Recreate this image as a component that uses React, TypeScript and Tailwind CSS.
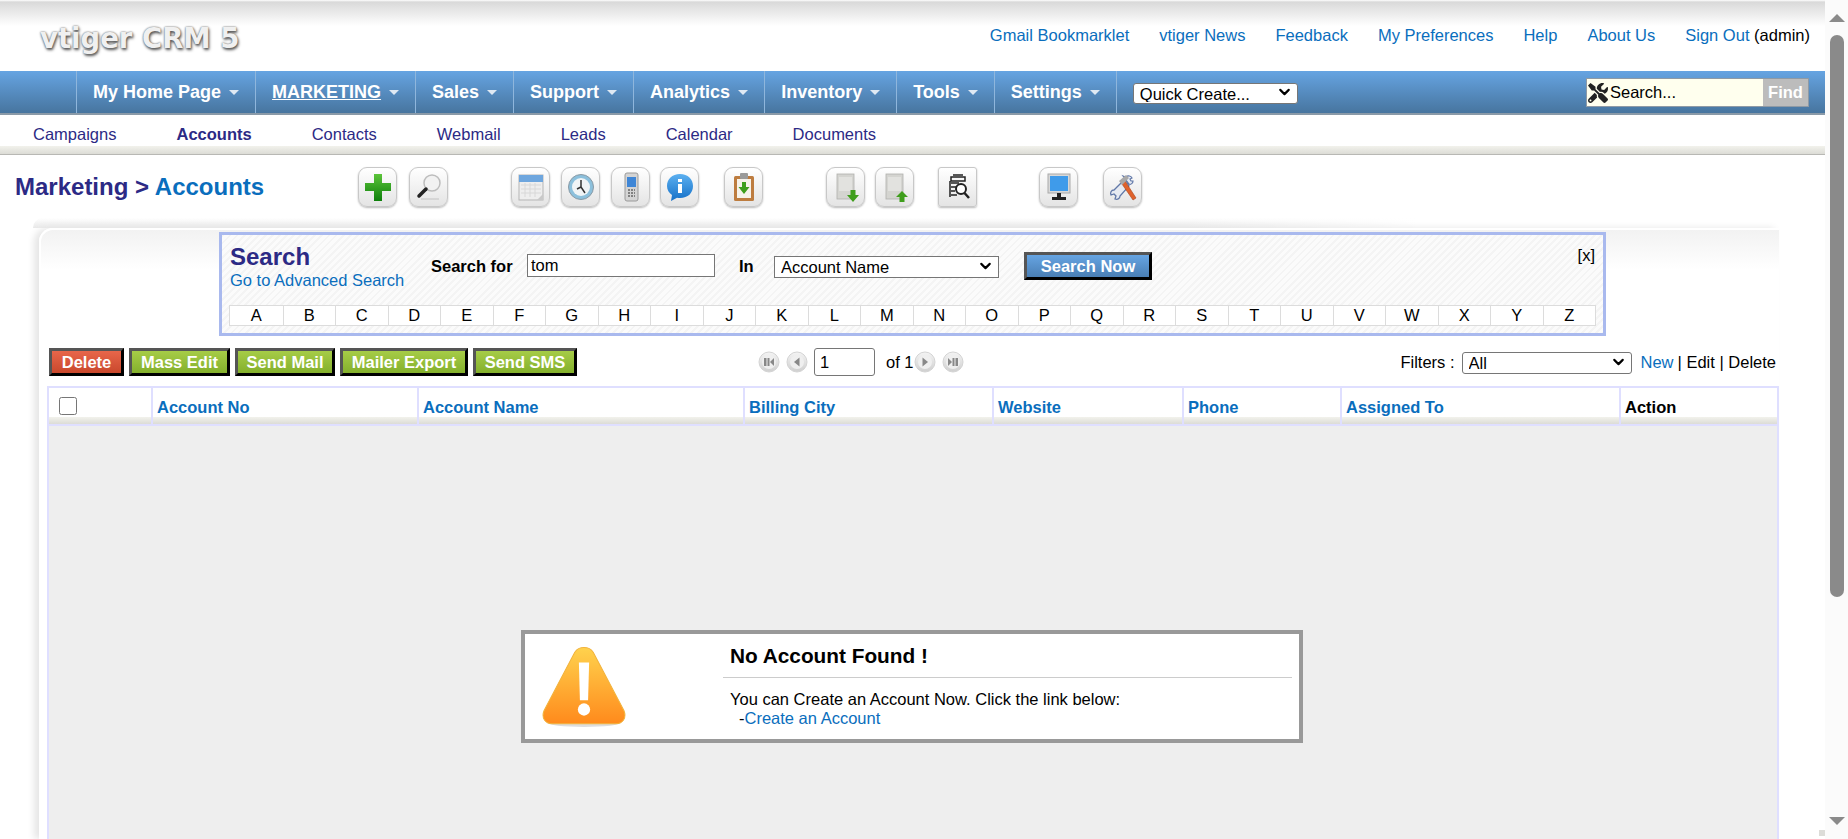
import { ChevronDown } from "lucide-react";
import { FaTools } from "react-icons/fa";
import type { ReactNode } from "react";

const topLinks = ["Gmail Bookmarklet", "vtiger News", "Feedback", "My Preferences", "Help", "About Us"];
const navItems = ["My Home Page", "MARKETING", "Sales", "Support", "Analytics", "Inventory", "Tools", "Settings"];
const subItems = ["Campaigns", "Accounts", "Contacts", "Webmail", "Leads", "Calendar", "Documents"];
const letters = "ABCDEFGHIJKLMNOPQRSTUVWXYZ".split("");
const columns = ["Account No", "Account Name", "Billing City", "Website", "Phone", "Assigned To"];
const actions = [
  { label: "Mass Edit", width: "w-[101px]" },
  { label: "Send Mail", width: "w-[100px]" },
  { label: "Mailer Export", width: "w-[128px]" },
  { label: "Send SMS", width: "w-[104px]" },
];

const IconButton = ({ className, children }: { className?: string; children: ReactNode }) => (
  <div
    className={`w-[39px] h-[40px] rounded-[9px] border border-[#c8c8c8] bg-gradient-to-b from-white to-[#e4e4e4] shadow-[0_1px_2px_#bbb] flex items-center justify-center shrink-0 ${className ?? ""}`}
  >
    <svg width="30" height="32" viewBox="0 0 30 32">
      {children}
    </svg>
  </div>
);

const NativeSelect = ({ value, className }: { value: string; className: string }) => (
  <div className={`relative shrink-0 ${className}`}>
    <select className="w-full h-full appearance-none bg-white border border-[#767676] rounded-[inherit] pl-[6px] text-[16.5px] leading-none text-black">
      <option>{value}</option>
    </select>
    <ChevronDown className="absolute right-[5px] top-1/2 -translate-y-1/2 w-[17px] h-[17px] text-black" strokeWidth={3} />
  </div>
);

const GreenArrow = ({ up }: { up?: boolean }) => (
  <path
    d={up ? "M22 20l6 6h-3.500v5h-5v-5H16z" : "M19.500 19h5v5H28l-6 7-6-7h3.500z"}
    fill="#3f9e1c"
  />
);

const GrayDoc = () => (
  <>
    <rect x="6" y="3" width="17" height="25" fill="#d4d4d0" stroke="#b0b0ac" strokeWidth="0.8" />
    <rect x="8" y="6" width="13" height="14" fill="#e2e2df" />
  </>
);

const PageArrow = ({ kind }: { kind: "first" | "prev" | "next" | "last" }) => (
  <svg width="22" height="22" viewBox="0 0 22 22" className="shrink-0">
    <defs>
      <linearGradient id={`pg-${kind}`} x1="0" y1="0" x2="0" y2="1">
        <stop offset="0" stopColor="#f4f4f4" />
        <stop offset="1" stopColor="#cfcfcf" />
      </linearGradient>
    </defs>
    <circle cx="11" cy="11" r="10" fill={`url(#pg-${kind})`} stroke="#d4d4d4" />
    <circle cx="11" cy="11" r="7" fill="#efefef" />
    {kind === "first" && <path d="M6 7h2.500v8H6zM9.500 7h2v8h-2zM16 7v8l-4-4z" fill="#888" />}
    {kind === "prev" && <path d="M13.500 6.500v9L8 11z" fill="#888" />}
    {kind === "next" && <path d="M8.500 6.500v9L14 11z" fill="#888" />}
    {kind === "last" && <path d="M6 7l4 4-4 4zM10.500 7h2v8h-2zM13.500 7H16v8h-2.500z" fill="#888" />}
  </svg>
);

const App = () => {
  return (
    <div className="flex h-[839px] w-full overflow-hidden bg-white font-['Liberation_Sans',Arial,sans-serif] text-[16.5px] text-black">
      <div className="relative w-[1825px] shrink-0">
        {/* top strip with logo and links */}
        <div className="h-[71px] bg-[linear-gradient(to_bottom,#fff_0,#d9d9d9_2px,#fff_26px)] flex items-start">
          <div className="ml-[40px] mt-[18px] text-[27.5px] leading-[40px] font-bold text-[#f0f0f0] font-['DejaVu_Sans',sans-serif] [text-shadow:0_0_2px_#555,1px_2px_3px_#555]">
            vtiger CRM 5
          </div>
          <div className="ml-auto mt-[25px] pr-[15px] flex items-center gap-[30px] leading-[20px]">
            {topLinks.map((link) => (
              <span key={link} className="text-[#0a6ebd]">
                {link}
              </span>
            ))}
            <span>
              <span className="text-[#0a6ebd]">Sign Out</span> (admin)
            </span>
          </div>
        </div>

        {/* main nav */}
        <div className="h-[44px] flex items-stretch pl-[76px] bg-gradient-to-b from-[#66a4e2] to-[#47759f] border-b-2 border-[#8a9aa8]">
          {navItems.map((item) => (
            <div
              key={item}
              className="flex items-center gap-[8px] px-4 border-l border-[#8fb6dc] text-white font-bold text-[18px]"
            >
              <span className={item === "MARKETING" ? "underline" : ""}>{item}</span>
              <span className="w-0 h-0 border-x-[5px] border-x-transparent border-t-[5px] border-t-[#dfe9f3]" />
            </div>
          ))}
          <div className="flex items-center pl-4 border-l border-[#8fb6dc]">
            <NativeSelect value="Quick Create..." className="w-[165px] h-[21px] rounded-[3px]" />
          </div>
          <div className="ml-auto mr-[16px] mt-[7px] mb-[6px] w-[223px] flex border border-[#8f9aa5] bg-[#ffffee]">
            <div className="flex-1 flex items-center pl-[1px] gap-[2px]">
              <FaTools className="w-[20px] h-[20px] text-[#222]" />
              <span>Search...</span>
            </div>
            <div className="w-[45px] bg-[#bcbcbc] flex items-center justify-center text-white font-bold">Find</div>
          </div>
        </div>

        {/* sub nav */}
        <div className="h-[31px] flex items-center gap-[60px] pl-[33px] pt-[8px] text-[#2c2a85]">
          {subItems.map((item) => (
            <span key={item} className={item === "Accounts" ? "font-bold" : ""}>
              {item}
            </span>
          ))}
        </div>
        <div className="h-[9px] bg-gradient-to-b from-[#f2f2ec] to-[#dcdcd6] border-b border-[#b8b8b4]" />

        {/* title + tool icons */}
        <div className="h-[63px] flex items-start pl-[15px] pt-[12px]">
          <div className="w-[343px] shrink-0 pt-[5px] text-[24px] leading-[30px] font-bold text-[#2c2a85]">
            Marketing &gt; <span className="text-[#0a6ebd]">Accounts</span>
          </div>
          <IconButton>
            <defs>
              <linearGradient id="plus" x1="0" y1="0" x2="0" y2="1">
                <stop offset="0" stopColor="#5cc43a" />
                <stop offset="1" stopColor="#0d7f0b" />
              </linearGradient>
            </defs>
            <path d="M11 3h8v9h9v8h-9v10h-8V20H2v-8h9z" fill="url(#plus)" />
          </IconButton>
          <IconButton className="ml-[12px]">
            <circle cx="18" cy="12" r="8" fill="#f2f2f2" stroke="#bdbdbd" strokeWidth="1.500" />
            <path d="M12 18L5 25" stroke="#222" strokeWidth="3.500" strokeLinecap="round" />
            <path d="M7 28h18" stroke="#cfcfcf" strokeWidth="1.500" />
          </IconButton>
          <IconButton className="ml-[63px]">
            <rect x="3" y="4" width="24" height="25" fill="#eeeeee" stroke="#b5b5b5" />
            <rect x="3" y="4" width="24" height="7" fill="#6ea6de" />
            <path d="M5 14h20M5 18h20M5 22h20M9 12v14M14 12v14M19 12v14" stroke="#d8d8d8" />
            <path d="M21 29l6-6v6z" fill="#c9c9c9" />
          </IconButton>
          <IconButton className="ml-[11px]">
            <circle cx="15" cy="16" r="12.500" fill="#8cc0dc" stroke="#8a9aa5" />
            <circle cx="15" cy="16" r="9" fill="#f0f4f6" />
            <path d="M15 9v7l4 6M15 16l-4 2" stroke="#333" strokeWidth="1.500" fill="none" />
          </IconButton>
          <IconButton className="ml-[11px]">
            <rect x="9" y="2" width="13" height="28" rx="2" fill="#d4d4d4" stroke="#9a9a9a" />
            <rect x="11" y="6" width="9" height="10" fill="#3f86d6" />
            <path d="M12 19h2M15 19h2M18 19h1M12 22h2M15 22h2M18 22h1M12 25h2M15 25h2M18 25h1" stroke="#666" strokeWidth="1.500" />
          </IconButton>
          <IconButton className="ml-[10px]">
            <defs>
              <linearGradient id="info" x1="0" y1="0" x2="0" y2="1">
                <stop offset="0" stopColor="#5cb0f0" />
                <stop offset="1" stopColor="#1570c8" />
              </linearGradient>
            </defs>
            <path d="M15 3c8 0 13 5 13 12s-5 12-13 12c-1 0-2 0-3-.3L6 30l1-6c-3-2-5-5-5-9C2 8 7 3 15 3z" fill="url(#info)" />
            <rect x="13" y="8" width="4" height="3" fill="#fff" />
            <rect x="13" y="13" width="4" height="9" fill="#fff" />
          </IconButton>
          <IconButton className="ml-[25px]">
            <rect x="5" y="5" width="20" height="25" rx="1.500" fill="#bd7c3f" />
            <rect x="8" y="8" width="14" height="19" fill="#f6f2ea" />
            <rect x="11" y="2" width="8" height="6" rx="1" fill="#9a9a9a" />
            <path d="M13 11h4v5h3.500L15 23l-5.500-7H13z" fill="#3f9e1c" />
          </IconButton>
          <IconButton className="ml-[63px]">
            <GrayDoc />
            <GreenArrow />
          </IconButton>
          <IconButton className="ml-[10px]">
            <GrayDoc />
            <GreenArrow up />
          </IconButton>
          <IconButton className="ml-[24px] !rounded-[3px]">
            <path d="M8 6h14v4H8zM10 4h10" fill="none" stroke="#222" strokeWidth="1.500" />
            <path d="M8 12h8M8 16h5M8 20h4M8 24h6M7 10v16" stroke="#222" strokeWidth="1.500" fill="none" />
            <circle cx="18" cy="18" r="5" fill="#fff" stroke="#222" strokeWidth="2" />
            <path d="M21.500 22L26 27" stroke="#222" strokeWidth="2.500" />
          </IconButton>
          <IconButton className="ml-[62px]">
            <rect x="4" y="3" width="22" height="19" fill="#d8d8d8" stroke="#aaa" />
            <rect x="6" y="5" width="18" height="15" fill="#3f9bea" />
            <path d="M13 22h4v4h5v3H8v-3h5z" fill="#222" />
          </IconButton>
          <IconButton className="ml-[25px]">
            {/* wrench */}
            <path d="M17 8l-11 11c-3 0-4 3-3 5l3-1 2 2-1 3c3 1 5-1 5-3l9-10-4-7z" fill="#e6eaf2" stroke="#6178a8" strokeWidth="1.300" />
            <path d="M15 5l3 1c2-2 5-1 6 1l-2 1 1 2 2 0c0 2-2 4-4 3z" fill="#e6eaf2" stroke="#6178a8" strokeWidth="1.200" />
            {/* hammer */}
            <path d="M14 13l3-3 11 17-3 2z" fill="#e0622c" stroke="#a6431a" strokeWidth="0.600" />
            <path d="M11 10l7-6 3 3-7 7z" fill="#a8a8a8" />
          </IconButton>
        </div>

        {/* soft edge above the panel, fades out to the right */}
        <div className="ml-[33px] w-[1390px] h-[10px] rounded-tl-[20px] bg-[linear-gradient(to_right,transparent_1150px,#fff_1385px),linear-gradient(to_bottom,#fff,#e8e8e8)]" />

        {/* main panel */}
        <div className="ml-[39px] w-[1740px] h-[611px] pt-[4px] rounded-tl-[14px] bg-[linear-gradient(to_bottom,#f2f2f2_0,#fff_40px)] border-t-2 border-l-2 border-white shadow-[-5px_0_7px_#e6e6e6]">
          {/* search box */}
          <div className="ml-[178px] w-[1387px] h-[104px] -mt-[2px] border-[3px] border-[#a9b9ee] bg-[repeating-linear-gradient(135deg,#f4f4f4_0px,#f4f4f4_2px,#fbfbfb_2px,#fbfbfb_5px)] flex flex-col">
            <div className="h-[70px] flex items-start">
              <div className="w-[209px] shrink-0 pl-[8px] pt-[10px]">
                <div className="text-[24px] leading-[24px] font-bold text-[#2c2a85]">Search</div>
                <div className="text-[#0a6ebd] leading-[22px]">Go to Advanced Search</div>
              </div>
              <div className="pt-[21px] w-[96px] shrink-0 font-bold leading-[20px]">Search for</div>
              <input
                defaultValue="tom"
                className="mt-[19px] w-[188px] h-[23px] px-[3px] bg-white border border-[#767676]"
              />
              <div className="pt-[21px] ml-[24px] w-[35px] shrink-0 font-bold leading-[20px]">In</div>
              <NativeSelect value="Account Name" className="mt-[20px] w-[225px] h-[22px]" />
              <button className="mt-[17px] ml-[25px] w-[128px] h-[28px] bg-gradient-to-b from-[#66a4e2] to-[#4a7fb5] border-[3px] border-t-[#555] border-l-[#555] border-r-black border-b-black text-white font-bold leading-none">
                Search Now
              </button>
              <div className="ml-auto mr-[8px] mt-[10px] leading-[20px]">[x]</div>
            </div>
            <div className="ml-[7px] mr-[7px] h-[21px] grid grid-cols-[repeat(26,1fr)] border border-[#dcdcdc] bg-white">
              {letters.map((letter, index) => (
                <div
                  key={letter}
                  className={`flex items-center justify-center leading-none ${index > 0 ? "border-l border-[#dcdcdc]" : ""}`}
                >
                  {letter}
                </div>
              ))}
            </div>
          </div>

          {/* action row */}
          <div className="mt-[12px] ml-[8px] mr-[3px] flex items-center h-[28px]">
            <div className="flex gap-[5px]">
              <button className="h-[28px] w-[75px] border-[3px] border-t-[#555] border-l-[#555] border-r-black border-b-black bg-gradient-to-b from-[#e8664a] to-[#c9482c] text-white font-bold leading-none">
                Delete
              </button>
              {actions.map((action) => (
                <button
                  key={action.label}
                  className={`h-[28px] ${action.width} border-[3px] border-t-[#555] border-l-[#555] border-r-black border-b-black bg-gradient-to-b from-[#a6cc47] to-[#84b02c] text-white font-bold leading-none`}
                >
                  {action.label}
                </button>
              ))}
            </div>
            <div className="ml-[181px] flex items-center">
              <PageArrow kind="first" />
              <span className="w-[6px]" />
              <PageArrow kind="prev" />
              <input defaultValue="1" className="ml-[6px] w-[61px] h-[28px] px-[5px] bg-white border border-[#767676] rounded-[3px]" />
              <span className="ml-[11px]">of 1</span>
              <PageArrow kind="next" />
              <span className="w-[6px]" />
              <PageArrow kind="last" />
            </div>
            <div className="ml-auto flex items-center">
              <span>Filters :</span>
              <NativeSelect value="All" className="ml-[7px] w-[170px] h-[22px] rounded-[3px]" />
              <span className="ml-[9px] text-[#0a6ebd]">New</span>
              <span className="ml-[4px]">| Edit | Delete</span>
            </div>
          </div>

          {/* table */}
          <div className="mt-[10px] ml-[6px] w-[1732px]">
            <div className="h-[40px] grid grid-cols-[102px_266px_326px_249px_190px_158px_279px_1fr] border-2 border-[#dfdfff] bg-[linear-gradient(to_bottom,#fff_0,#fff_29px,#f2f2ec_29px,#dcdcd6_100%)]">
              <div className="flex items-center pl-[10px]">
                <input type="checkbox" className="w-[18px] h-[18px]" />
              </div>
              {columns.map((column) => (
                <div
                  key={column}
                  className="border-l-2 border-[#dfdfff] pl-[4px] pt-[9px] leading-[20px] font-bold text-[#0a6ebd]"
                >
                  {column}
                </div>
              ))}
              <div className="border-l-2 border-[#dfdfff] pl-[4px] pt-[9px] leading-[20px] font-bold">Action</div>
            </div>
            <div className="h-[420px] pt-[204px] bg-[#eeeeee] border-x-2 border-[#dfdfff]">
              <div className="ml-[472px] w-[782px] h-[113px] flex border-4 border-[#999] bg-white">
                <div className="w-[198px] shrink-0 pl-[15px] pt-[13px]">
                  <svg width="88" height="82" viewBox="0 0 86 80">
                    <defs>
                      <linearGradient id="warn" x1="0" y1="0" x2="0" y2="1">
                        <stop offset="0" stopColor="#ffd24d" />
                        <stop offset="1" stopColor="#ff8a1c" />
                      </linearGradient>
                    </defs>
                    <ellipse cx="43" cy="74" rx="36" ry="4" fill="#ddd" />
                    <path d="M34 5c4-6 14-6 18 0l30 57c3 7-1 13-8 13H12C5 75 1 69 4 62z" fill="url(#warn)" stroke="#f2b33c" />
                    <path d="M38 15h10l-1 37h-8z" fill="#fff" />
                    <circle cx="43" cy="61" r="6" fill="#fff" />
                  </svg>
                </div>
                <div className="flex-1 mr-[7px]">
                  <div className="h-[44px] pl-[7px] pt-[7px] border-b border-[#ccc] text-[20.8px] leading-[30px] font-bold">
                    No Account Found !
                  </div>
                  <div className="pl-[7px] pt-[12px] leading-[19px]">
                    <div>You can Create an Account Now. Click the link below:</div>
                    <div className="pl-[9px]">
                      -<span className="text-[#0a6ebd]">Create an Account</span>
                    </div>
                  </div>
                </div>
              </div>
            </div>
          </div>
        </div>
        <span className="absolute left-[1819px] top-[830px] w-[6px] h-[6px] bg-[#dcdcd8]" />
      </div>

      {/* page scrollbar */}
      <div className="w-[23px] shrink-0 h-full bg-[#fbfbfb] flex flex-col items-center pt-[14px] pb-[14px]">
        <span className="w-0 h-0 border-x-[8px] border-x-transparent border-b-[8px] border-b-[#8a8a8a]" />
        <div className="mt-[13px] w-[14px] h-[562px] rounded-full bg-[#8a8a8a]" />
        <span className="mt-auto w-0 h-0 border-x-[8px] border-x-transparent border-t-[8px] border-t-[#8a8a8a]" />
      </div>
    </div>
  );
};

export default App;
